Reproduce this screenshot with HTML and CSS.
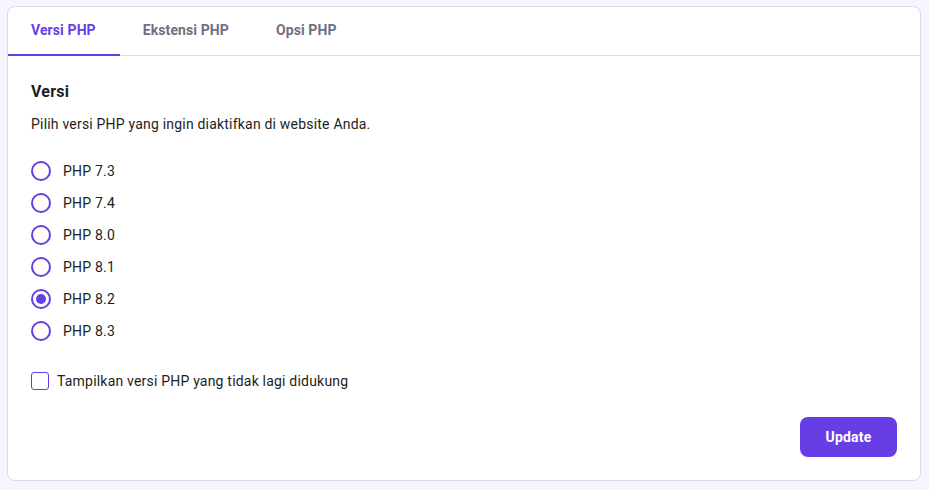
FILE: index.html
```
<!DOCTYPE html>
<html lang="id">
<head>
  <meta charset="UTF-8">
  <title>PHP Configuration</title>
  <link rel="stylesheet" href="styles.css">
</head>
<body>
<div class="card">

  <div class="tabs">
    <div class="tab active">Versi PHP</div>
    <div class="tab">Ekstensi PHP</div>
    <div class="tab">Opsi PHP</div>
  </div>

  <div class="content">
    <h2>Versi</h2>
    <p class="desc">Pilih versi PHP yang ingin diaktifkan di website Anda.</p>

    <div class="radioList">
      <label class="radioRow"><span class="radio"></span>PHP 7.3</label>
      <label class="radioRow"><span class="radio"></span>PHP 7.4</label>
      <label class="radioRow"><span class="radio"></span>PHP 8.0</label>
      <label class="radioRow"><span class="radio"></span>PHP 8.1</label>
      <label class="radioRow"><span class="radio checked"></span>PHP 8.2</label>
      <label class="radioRow"><span class="radio"></span>PHP 8.3</label>
    </div>

    <label class="checkRow"><span class="checkbox"></span>Tampilkan versi PHP yang tidak lagi didukung</label>

    <div class="actions">
      <button type="button" class="btn">Update</button>
    </div>
  </div>

</div>
</body>
</html>
```

FILE: styles.css
```
body {
  margin: 0;
  padding: 6px 8px 9px 7px;
  background: #f4f5ff;
  font-family: Roboto, "Liberation Sans", sans-serif;
  letter-spacing: 0.2px;
  color: #1d1e20;
}

.card {
  background: #fff;
  border: 1px solid #dadce0;
  border-radius: 8px;
  box-sizing: border-box;
  height: 475px;
}

.tabs {
  display: flex;
  height: 48px;
  border-bottom: 1px solid #dadce0;
}

.tab {
  padding: 0 24px 0 23px;
  font-size: 14px;
  font-weight: 700;
  letter-spacing: 0.1px;
  color: #6d7081;
  line-height: 47px;
  border-bottom: 2px solid transparent;
  margin-bottom: -1px;
}

.tab.active {
  color: #673de6;
  border-bottom-color: #673de6;
}

.content {
  padding: 24px 23px 24px 23px;
}

h2 {
  font-size: 16px;
  font-weight: 700;
  line-height: 24px;
  margin: 0 0 8px;
}

.desc {
  font-size: 14px;
  line-height: 24px;
  margin: 0;
}

.radioList {
  margin-top: 19px;
}

.radioRow {
  display: flex;
  align-items: center;
  height: 32px;
  font-size: 14px;
}

.radio {
  width: 20px;
  height: 20px;
  box-sizing: border-box;
  border: 2px solid #673de6;
  border-radius: 50%;
  margin-right: 12px;
  position: relative;
}

.radio.checked::after {
  content: "";
  position: absolute;
  left: 3px;
  top: 3px;
  width: 10px;
  height: 10px;
  border-radius: 50%;
  background: #673de6;
}

.checkRow {
  display: flex;
  align-items: center;
  height: 24px;
  margin-top: 22px;
  font-size: 14px;
}

.checkbox {
  width: 18px;
  height: 18px;
  box-sizing: border-box;
  border: 1.5px solid #673de6;
  border-radius: 3px;
  margin-right: 8px;
}

.actions {
  display: flex;
  justify-content: flex-end;
  margin-top: 24px;
}

.btn {
  width: 97px;
  height: 40px;
  border: none;
  border-radius: 8px;
  background: #673de6;
  color: #fff;
  font-family: Roboto, "Liberation Sans", sans-serif;
  letter-spacing: 0.2px;
  font-size: 14px;
  font-weight: 700;
}
```
